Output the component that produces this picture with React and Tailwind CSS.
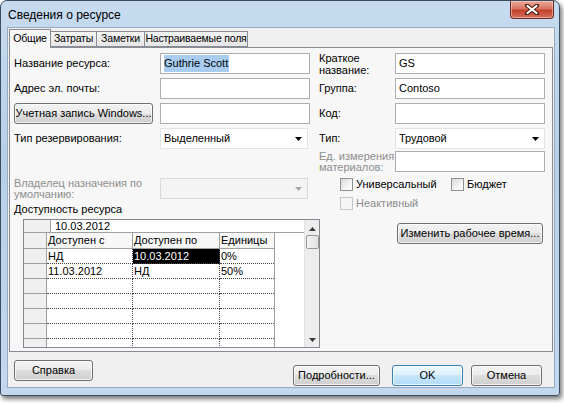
import React from "react";

const Tri = ({ color = "#000" }) => (
  <svg width="7" height="4" viewBox="0 0 7 4">
    <polygon points="0,0 7,0 3.5,4" fill={color} />
  </svg>
);

const Field = ({ value, selected, className = "" }) => (
  <div className={`h-[21px] bg-white border border-[#abadb3] flex items-center pl-[3px] ${className}`}>
    {value && <span className={selected ? "bg-[#a9cdf1] pr-px" : ""}>{value}</span>}
  </div>
);

const Select = ({ value, disabled, className = "" }) => (
  <div
    className={`h-[21px] border flex items-center pl-[3px] pr-[5px] ${
      disabled ? "bg-[#f4f4f4] border-[#d9d9d9]" : "bg-white border-[#e3e3e3]"
    } ${className}`}
  >
    <span className="flex-1">{value}</span>
    <Tri color={disabled ? "#a6a6a6" : "#000"} />
  </div>
);

const Button = ({ children, primary, className = "" }) => (
  <div
    className={`h-[21px] rounded-[3px] border flex items-center justify-center shadow-[inset_0_0_0_1px_rgba(255,255,255,0.7)] ${
      primary
        ? "border-[#3c7fb1] bg-[linear-gradient(to_bottom,#edf7fd_0%,#dcf0fc_50%,#c6e6fb_50%,#b5ddf8_100%)]"
        : "border-[#707070] bg-[linear-gradient(to_bottom,#f2f2f2_0%,#ebebeb_50%,#dddddd_50%,#cfcfcf_100%)]"
    } ${className}`}
  >
    {children}
  </div>
);

const Check = ({ label, disabled, className = "" }) => (
  <div className={`flex items-center ${className}`}>
    <div
      className={`w-[13px] h-[13px] border ${
        disabled
          ? "border-[#c6c6c6] bg-[#f5f5f5]"
          : "border-[#8f8f8f] bg-[linear-gradient(135deg,#d6d6d6_0%,#f4f4f4_60%,#ffffff_100%)]"
      }`}
    />
    <span className={`ml-[3px] ${disabled ? "text-[#8d8d8d]" : ""}`}>{label}</span>
  </div>
);

const rows = [
  ["НД", "10.03.2012", "0%"],
  ["11.03.2012", "НД", "50%"],
  ["", "", ""],
  ["", "", ""],
  ["", "", ""],
  ["", "", ""],
  ["", "", ""],
];

const Availability = () => (
  <div className="ml-[9px] mt-[3px] w-[297px] h-[129px] border border-[#828790] bg-white flex overflow-hidden">
    <div className="flex-1 flex flex-col">
      {/* timescale row */}
      <div className="flex h-[13px] border-b border-[#a0a0a0] leading-[12px]">
        <div className="w-[27px] bg-[#f0f0f0] border-r border-[#a0a0a0]" />
        <div className="pl-[4px]">10.03.2012</div>
      </div>
      {/* header */}
      <div className="flex h-[16px] leading-[15px]">
        <div className="w-[23px] bg-[#f0f0f0] border-r border-b border-[#a0a0a0]" />
        <div className="w-[86px] pl-px bg-[#f7f7f7] border-r border-b border-[#a0a0a0]">Доступен с</div>
        <div className="w-[87px] pl-px bg-[#f7f7f7] border-r border-b border-[#a0a0a0]">Доступен по</div>
        <div className="w-[55px] pl-px bg-[#f7f7f7] border-r border-b border-[#a0a0a0]">Единицы</div>
      </div>
      {rows.map((r, i) => (
        <div key={i} className="flex h-[15px] shrink-0 leading-[14px]">
          <div className="w-[23px] bg-[#f0f0f0] border-r border-b border-[#a0a0a0]" />
          <div className="w-[86px] pl-px border-r border-b border-dotted border-[#444]">{r[0]}</div>
          <div
            className={`w-[87px] pl-px border-r border-b border-dotted border-[#444] ${
              i === 0 ? "bg-black text-white" : ""
            }`}
          >
            {r[1]}
          </div>
          <div className="w-[55px] pl-px border-r border-[#a0a0a0] relative">
            <div className="absolute left-0 right-0 bottom-0 border-b border-dotted border-[#444]" />
            {r[2]}
          </div>
        </div>
      ))}
    </div>
    {/* scrollbar */}
    <div className="w-[15px] bg-[#ededed] border-l border-[#e2e2e2] flex flex-col items-center">
      <div className="mt-[7px] rotate-180">
        <Tri color="#3a3a3a" />
      </div>
      <div className="mt-[4px] w-[13px] h-[14px] rounded-[2px] border border-[#979797] bg-[linear-gradient(to_right,#f3f3f3,#e2e2e2)]" />
      <div className="flex-1" />
      <div className="mb-[5px]">
        <Tri color="#3a3a3a" />
      </div>
    </div>
  </div>
);

export default function App() {
  return (
    <div className="w-[564px] h-[403px] bg-white font-['Liberation_Sans',Arial,sans-serif] text-[11px] text-black whitespace-nowrap">
      <div className="w-[560px] h-[396px] rounded-t-[7px] rounded-b-[3px] border border-[#3d4b5a] bg-[linear-gradient(to_bottom,#c6dbef_0%,#b7cfe8_40%,#c3d8ee_100%)] shadow-[2px_3px_5px_rgba(0,0,0,0.55)] flex flex-col">
        {/* title bar */}
        <div className="h-[26px] flex items-start shrink-0">
          <div className="pl-[7px] pt-[6px] text-[12px] leading-[16px]">Сведения о ресурсе</div>
          <div className="ml-auto mr-[5px] w-[44px] h-[18px] rounded-b-[4px] border border-t-0 border-[#6e2a22] bg-[linear-gradient(to_bottom,#e9aa9f_0%,#d9745f_45%,#c4412d_55%,#d3705c_100%)] flex items-center justify-center shadow-[inset_0_0_0_1px_rgba(255,220,210,0.5)]">
            <svg width="14" height="11" viewBox="0 0 14 11">
              <path d="M2 1.5 L12 9.5 M12 1.5 L2 9.5" stroke="#4a1a14" strokeWidth="4" strokeLinecap="round" />
              <path d="M2.5 2 L11.5 9 M11.5 2 L2.5 9" stroke="#ffffff" strokeWidth="2.2" strokeLinecap="round" />
            </svg>
          </div>
        </div>

        {/* client area */}
        <div className="ml-[6px] mr-[4px] h-[361px] border border-[#96aac0] bg-[#f0f0f0] flex flex-col">
          {/* tabs */}
          <div className="flex items-end h-[19px] pl-[1px] relative z-10 text-[10.5px] tracking-[-0.2px]">
            <div className="w-[42px] shrink-0 h-[19px] -mb-px border border-b-0 border-[#898c95] bg-[#f7f7f7] flex items-center justify-center">
              Общие
            </div>
            <div className="w-[46px] shrink-0 h-[16px] border border-l-0 border-[#898c95] bg-[linear-gradient(to_bottom,#f4f4f4,#e6e6e6)] flex items-center justify-center">
              Затраты
            </div>
            <div className="w-[48px] shrink-0 h-[16px] border border-l-0 border-[#898c95] bg-[linear-gradient(to_bottom,#f4f4f4,#e6e6e6)] flex items-center justify-center">
              Заметки
            </div>
            <div className="w-[103px] shrink-0 h-[16px] border border-l-0 border-[#898c95] bg-[linear-gradient(to_bottom,#f4f4f4,#e6e6e6)] flex items-center justify-center">
              Настраиваемые поля
            </div>
          </div>

          {/* panel */}
          <div className="ml-[1px] mr-[1px] h-[305px] border border-[#898c95] bg-[#f7f7f7] flex pl-[4px] pt-[5px]">
            {/* left column */}
            <div className="w-[305px] flex flex-col">
              <div className="flex flex-col gap-[4px]">
                <div className="flex h-[21px] items-center">
                  <div className="w-[146px]">Название ресурса:</div>
                  <Field className="w-[150px]" value="Guthrie Scott" selected />
                </div>
                <div className="flex h-[21px] items-center">
                  <div className="w-[146px]">Адрес эл. почты:</div>
                  <Field className="w-[150px]" />
                </div>
                <div className="flex h-[21px] items-center">
                  <div className="w-[146px]">
                    <Button className="w-[139px]">Учетная запись Windows...</Button>
                  </div>
                  <Field className="w-[150px]" />
                </div>
                <div className="flex h-[21px] items-center">
                  <div className="w-[146px]">Тип резервирования:</div>
                  <Select className="w-[148px]" value="Выделенный" />
                </div>
              </div>

              <div className="flex mt-[28px] items-start">
                <div className="w-[146px] leading-[11px] text-[#8d8d8d] pt-px">
                  Владелец назначения по
                  <br />
                  умолчанию:
                </div>
                <Select className="w-[148px] h-[20px] mt-px" disabled />
              </div>
              <div className="mt-[2px] leading-[14px] h-[14px]">Доступность ресурса</div>
              <Availability />
            </div>

            {/* right column */}
            <div className="w-[226px] flex flex-col">
              <div className="flex flex-col gap-[4px]">
                <div className="flex h-[21px] items-center">
                  <div className="w-[76px] leading-[12px]">
                    Краткое
                    <br />
                    название:
                  </div>
                  <Field className="w-[150px]" value="GS" />
                </div>
                <div className="flex h-[21px] items-center">
                  <div className="w-[76px]">Группа:</div>
                  <Field className="w-[150px]" value="Contoso" />
                </div>
                <div className="flex h-[21px] items-center">
                  <div className="w-[76px]">Код:</div>
                  <Field className="w-[150px]" />
                </div>
                <div className="flex h-[21px] items-center">
                  <div className="w-[76px]">Тип:</div>
                  <Select className="w-[150px]" value="Трудовой" />
                </div>
              </div>
              <div className="flex h-[21px] items-center mt-[2px]">
                <div className="w-[76px] leading-[11px] text-[#8d8d8d]">
                  Ед. измерения
                  <br />
                  материалов:
                </div>
                <Field className="w-[150px]" />
              </div>
              <div className="flex mt-[6px] ml-[21px] h-[13px]">
                <Check className="w-[111px]" label="Универсальный" />
                <Check label="Бюджет" />
              </div>
              <div className="flex mt-[6px] ml-[21px] h-[13px]">
                <Check label="Неактивный" disabled />
              </div>
              <Button className="mt-[13px] ml-[78px] w-[146px]">Изменить рабочее время...</Button>
            </div>
          </div>

          {/* footer */}
          <div className="flex items-start pt-[8px] pl-[6px] pr-[12px]">
            <Button className="w-[79px]">Справка</Button>
            <div className="flex-1" />
            <Button className="w-[87px] mt-[5px]">Подробности...</Button>
            <Button primary className="w-[71px] mt-[5px] ml-[12px]">
              OK
            </Button>
            <Button className="w-[71px] mt-[5px] ml-[8px]">Отмена</Button>
          </div>
        </div>
      </div>
    </div>
  );
}
